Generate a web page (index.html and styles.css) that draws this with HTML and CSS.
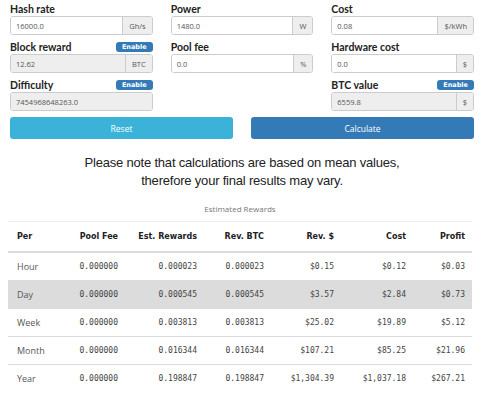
FILE: index.html
```html
<!DOCTYPE html>
<html lang="en">
<head>
    <meta charset="UTF-8">
    <meta name="viewport" content="width=device-width, initial-scale=1.0">
    <title>Mining Calculator</title>
    <link rel="stylesheet" href="styles.css">
</head>
<body>
    <div class="page">
        <form class="fields">
            <div class="field">
                <div class="label-row"><label>Hash rate</label></div>
                <div class="input-group">
                    <span class="value">16000.0</span>
                    <span class="addon">Gh/s</span>
                </div>
            </div>
            <div class="field">
                <div class="label-row"><label>Power</label></div>
                <div class="input-group">
                    <span class="value">1480.0</span>
                    <span class="addon">W</span>
                </div>
            </div>
            <div class="field">
                <div class="label-row"><label>Cost</label></div>
                <div class="input-group">
                    <span class="value">0.08</span>
                    <span class="addon">$/kWh</span>
                </div>
            </div>

            <div class="field">
                <div class="label-row"><label>Block reward</label><span class="badge">Enable</span></div>
                <div class="input-group disabled">
                    <span class="value">12.62</span>
                    <span class="addon">BTC</span>
                </div>
            </div>
            <div class="field">
                <div class="label-row"><label>Pool fee</label></div>
                <div class="input-group">
                    <span class="value">0.0</span>
                    <span class="addon">%</span>
                </div>
            </div>
            <div class="field">
                <div class="label-row"><label>Hardware cost</label></div>
                <div class="input-group">
                    <span class="value">0.0</span>
                    <span class="addon">$</span>
                </div>
            </div>

            <div class="field">
                <div class="label-row"><label>Difficulty</label><span class="badge">Enable</span></div>
                <div class="input-group disabled">
                    <span class="value">7454968648263.0</span>
                </div>
            </div>
            <div class="field"></div>
            <div class="field">
                <div class="label-row"><label>BTC value</label><span class="badge">Enable</span></div>
                <div class="input-group disabled">
                    <span class="value">6559.8</span>
                    <span class="addon">$</span>
                </div>
            </div>
        </form>

        <div class="buttons">
            <button type="button" class="btn btn-reset">Reset</button>
            <button type="button" class="btn btn-calc">Calculate</button>
        </div>

        <p class="note">Please note that calculations are based on mean values,<br>therefore your final results may vary.</p>

        <table class="rewards">
            <caption>Estimated Rewards</caption>
            <colgroup>
                <col style="width:60px"><col style="width:57px"><col style="width:79px"><col style="width:67px"><col style="width:70px"><col style="width:72px"><col style="width:59px">
            </colgroup>
            <thead>
                <tr>
                    <th class="left">Per</th>
                    <th>Pool Fee</th>
                    <th>Est. Rewards</th>
                    <th>Rev. BTC</th>
                    <th>Rev. $</th>
                    <th>Cost</th>
                    <th>Profit</th>
                </tr>
            </thead>
            <tbody>
                <tr>
                    <td class="left">Hour</td>
                    <td>0.000000</td><td>0.000023</td><td>0.000023</td><td>$0.15</td><td>$0.12</td><td>$0.03</td>
                </tr>
                <tr class="active">
                    <td class="left">Day</td>
                    <td>0.000000</td><td>0.000545</td><td>0.000545</td><td>$3.57</td><td>$2.84</td><td>$0.73</td>
                </tr>
                <tr>
                    <td class="left">Week</td>
                    <td>0.000000</td><td>0.003813</td><td>0.003813</td><td>$25.02</td><td>$19.89</td><td>$5.12</td>
                </tr>
                <tr>
                    <td class="left">Month</td>
                    <td>0.000000</td><td>0.016344</td><td>0.016344</td><td>$107.21</td><td>$85.25</td><td>$21.96</td>
                </tr>
                <tr>
                    <td class="left">Year</td>
                    <td>0.000000</td><td>0.198847</td><td>0.198847</td><td>$1,304.39</td><td>$1,037.18</td><td>$267.21</td>
                </tr>
            </tbody>
        </table>
    </div>
</body>
</html>
```

FILE: styles.css
```css
body {
    margin: 0;
    background: #fff;
    color: #333;
    font-family: "Open Sans", "Liberation Sans", sans-serif;
}

.page {
    width: 464px;
    padding: 2px 0 0 10px;
}

.fields {
    display: grid;
    grid-template-columns: repeat(3, 1fr);
    column-gap: 18px;
    row-gap: 5px;
    margin: 0;
}

.label-row {
    display: flex;
    justify-content: space-between;
    align-items: center;
    height: 13px;
    margin-bottom: 1px;
}

.label-row label {
    font-family: "Lato", "Liberation Sans", sans-serif;
    font-weight: bold;
    font-size: 10.5px;
    color: #222;
}

.badge {
    background: #337ab7;
    color: #fff;
    font-family: "DejaVu Sans", sans-serif;
    font-weight: bold;
    font-size: 6.5px;
    padding: 1px 6px;
    border-radius: 3px;
    line-height: 8px;
}

.input-group {
    display: flex;
    height: 19px;
    border: 1px solid #ccc;
    border-radius: 3px;
    box-sizing: border-box;
    font-size: 7.5px;
    color: #555;
    overflow: hidden;
}

.input-group .value {
    flex: 1;
    display: flex;
    align-items: center;
    padding-left: 5px;
    background: #fff;
}

.input-group.disabled .value {
    background: #eee;
}

.input-group .addon {
    display: flex;
    align-items: center;
    padding: 0 6px;
    background: #eee;
    border-left: 1px solid #ccc;
}

.buttons {
    display: flex;
    gap: 18px;
    margin-top: 6px;
}

.btn {
    flex: 1;
    height: 22px;
    border: none;
    border-radius: 3px;
    color: #fff;
    font-family: "Open Sans", "Liberation Sans", sans-serif;
    font-size: 8.5px;
    cursor: pointer;
}

.btn-reset {
    background: #3bb3d8;
}

.btn-calc {
    background: #337ab7;
}

.note {
    margin: 15px 0 0;
    text-align: center;
    font-family: "Liberation Sans", sans-serif;
    font-size: 13px;
    letter-spacing: -0.2px;
    line-height: 18px;
    color: #222;
}

.rewards {
    width: 464px;
    margin: 13px 0 0 -2px;
    border-collapse: collapse;
    table-layout: fixed;
}

.rewards caption {
    font-size: 8px;
    color: #777;
    padding-bottom: 7px;
    border-bottom: 1px solid #eee;
}

.rewards th,
.rewards td {
    text-align: right;
    padding: 0 7px;
    height: 27px;
    border-top: 1px solid #ddd;
}

.rewards th {
    font-family: "DejaVu Sans", sans-serif;
    font-weight: bold;
    font-size: 8px;
    color: #222;
    height: 29px;
    border-top: none;
    border-bottom: 2px solid #ddd;
}

.rewards td {
    font-family: "DejaVu Sans Mono", monospace;
    font-size: 8px;
    color: #444;
}

.rewards .left {
    text-align: left;
    padding-left: 9px;
}

.rewards td.left {
    font-family: "Open Sans", "Liberation Sans", sans-serif;
    font-size: 9px;
    color: #555;
}

.rewards tr.active td {
    background: #dcdcdc;
}
```
